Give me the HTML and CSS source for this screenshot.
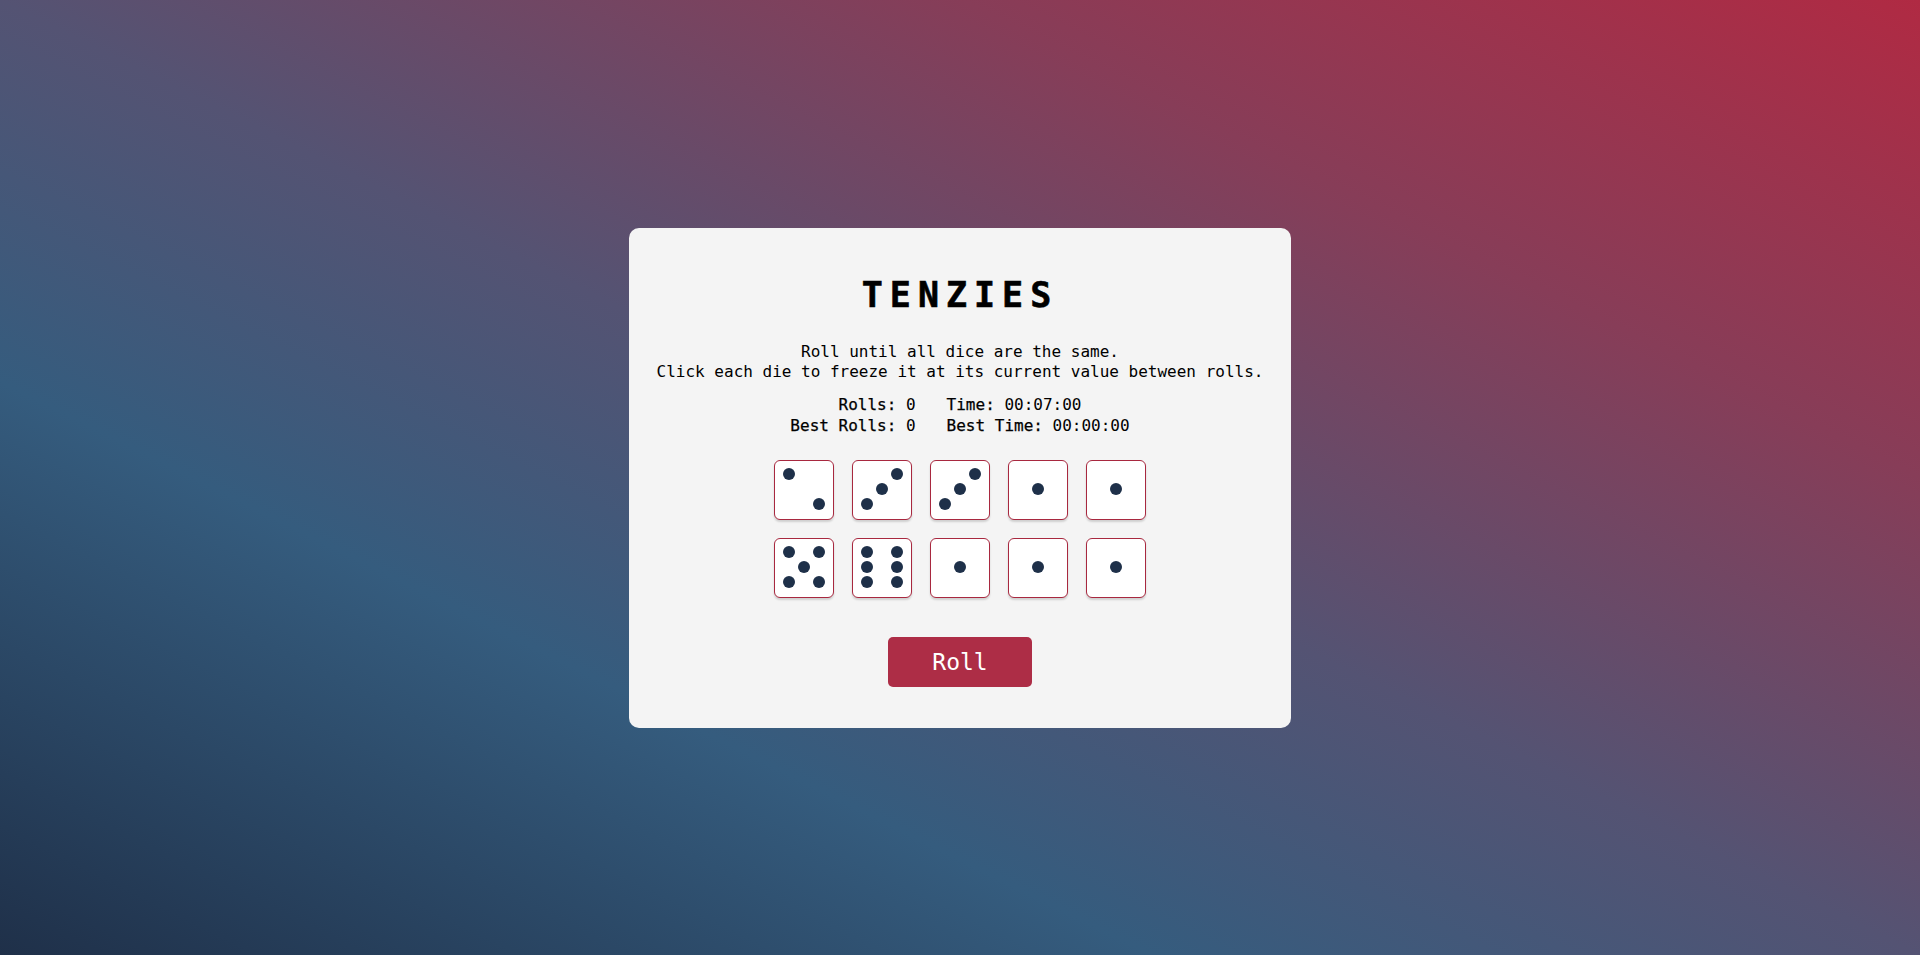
FILE: index.html
```html
<!DOCTYPE html>
<html lang="en">
<head>
<meta charset="utf-8">
<title>Tenzies</title>
<link rel="stylesheet" href="styles.css">
</head>
<body>
<main class="card">
  <h1 class="title">TENZIES</h1>
  <p class="desc">Roll until all dice are the same.<br>Click each die to freeze it at its current value between rolls.</p>
  <div class="stats">
    <div class="stat-l"><span class="label">Rolls:</span> 0</div>
    <div class="stat-r"><span class="label">Time:</span> 00:07:00</div>
    <div class="stat-l"><span class="label">Best Rolls:</span> 0</div>
    <div class="stat-r"><span class="label">Best Time:</span> 00:00:00</div>
  </div>
  <div class="dice">
    <div class="die"><span class="pip tl"></span><span class="pip br"></span></div>
    <div class="die"><span class="pip tr"></span><span class="pip c"></span><span class="pip bl"></span></div>
    <div class="die"><span class="pip tr"></span><span class="pip c"></span><span class="pip bl"></span></div>
    <div class="die"><span class="pip c"></span></div>
    <div class="die"><span class="pip c"></span></div>
    <div class="die"><span class="pip tl"></span><span class="pip tr"></span><span class="pip c"></span><span class="pip bl"></span><span class="pip br"></span></div>
    <div class="die"><span class="pip tl"></span><span class="pip tr"></span><span class="pip ml"></span><span class="pip mr"></span><span class="pip bl"></span><span class="pip br"></span></div>
    <div class="die"><span class="pip c"></span></div>
    <div class="die"><span class="pip c"></span></div>
    <div class="die"><span class="pip c"></span></div>
  </div>
  <button class="roll">Roll</button>
</main>
</body>
</html>
```
FILE: styles.css
```css
* { box-sizing: border-box; }
html, body { height: 100%; }
body {
  margin: 0;
  min-height: 100vh;
  display: flex;
  align-items: center;
  justify-content: center;
  font-family: "DejaVu Sans Mono", monospace;
  color: #000;
  background: linear-gradient(to top right, #1f3049 0%, #355c7e 30%, #545373 50%, #873d58 75%, #b02a43 100%);
}
.card {
  width: 662px;
  background: #f4f4f4;
  border-radius: 10px;
  padding: 47px 0 41px;
  display: flex;
  flex-direction: column;
  align-items: center;
}
.title {
  margin: 0 0 27px;
  font-size: 35px;
  line-height: 40px;
  font-weight: bold;
  letter-spacing: 7px;
  -webkit-text-stroke: 0.6px #000;
}
.desc {
  margin: 0 0 12px;
  font-size: 16px;
  line-height: 20px;
  text-align: center;
}
.stats {
  display: grid;
  grid-template-columns: auto auto;
  column-gap: 31px;
  font-size: 16px;
  line-height: 21px;
  margin-bottom: 24px;
}
.stat-l { text-align: right; }
.stat-r { text-align: left; }
.label { -webkit-text-stroke: 0.25px #000; }
.dice {
  display: grid;
  grid-template-columns: repeat(5, 60px);
  grid-auto-rows: 60px;
  gap: 18px;
  margin-bottom: 39px;
}
.die {
  background: #fff;
  border: 1.5px solid #a8283f;
  border-radius: 6px;
  box-shadow: 0 2px 2px rgba(0, 0, 0, 0.15);
  padding: 6px;
  display: grid;
  grid-template-columns: repeat(3, 15px);
  grid-template-rows: repeat(3, 15px);
}
.pip {
  width: 12px;
  height: 12px;
  border-radius: 50%;
  background: #1e3049;
  place-self: center;
}
.tl { grid-area: 1 / 1; }
.tr { grid-area: 1 / 3; }
.ml { grid-area: 2 / 1; }
.c  { grid-area: 2 / 2; }
.mr { grid-area: 2 / 3; }
.bl { grid-area: 3 / 1; }
.br { grid-area: 3 / 3; }
.roll {
  width: 144px;
  height: 50px;
  border: none;
  border-radius: 5px;
  background: #ad2d46;
  color: #fff;
  font-family: "DejaVu Sans Mono", monospace;
  font-size: 23px;
  padding: 0;
  cursor: pointer;
}
```
